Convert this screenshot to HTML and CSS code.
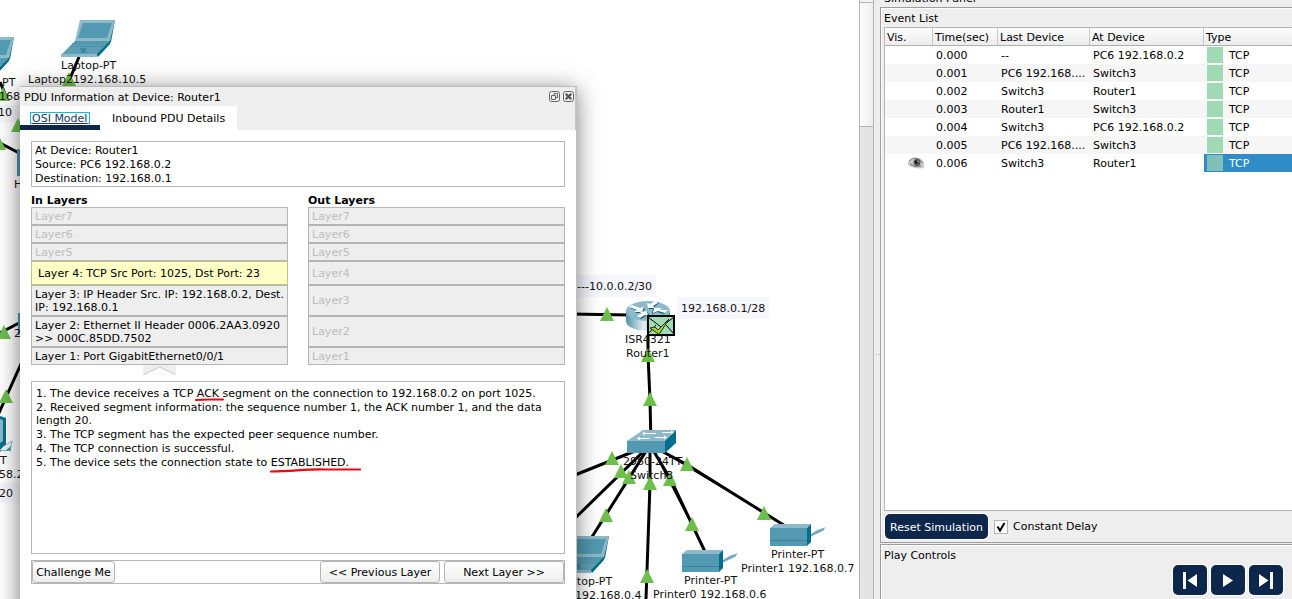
FILE: index.html
```html
<!DOCTYPE html>
<html lang="en">
<head>
<meta charset="utf-8">
<title>Packet Tracer - Simulation</title>
<link rel="stylesheet" href="styles.css">
</head>
<body>
<div class="app">
  <main class="workspace">
    <svg class="topology" width="859" height="599" viewBox="0 0 859 599">
      <defs>
        <linearGradient id="cyl" x1="0" x2="1"><stop offset="0" stop-color="#4f93ab"/><stop offset=".4" stop-color="#e3eef2"/><stop offset=".7" stop-color="#9cc3d1"/><stop offset="1" stop-color="#3f87a2"/></linearGradient>
        <g id="laptop">
          <path d="M54 0 50 22 37 36 34 34 48 20 52 1Z" fill="#006e8c"/>
          <path d="M19 0H54L49 21H14Z" fill="#8db9c9"/>
          <path d="M22 3H51L46 18H17Z" fill="#5399b1"/>
          <path d="M14 21H49L36 35H0Z" fill="#5f9fb5"/>
          <path d="M14 22H48M11 24H46M9 26.500H44" stroke="#3f8ba5" stroke-dasharray="2 1"/>
          <path d="M0 34H36V37H0Z" fill="#8db9c9"/>
          <path d="M36 34 49 21V24L37 37Z" fill="#006e8c"/>
          <path d="M19 29h6l-5 3h6" stroke="#1e7895" fill="none"/>
        </g>
        <g id="printer">
          <path d="M38 12 47 6 56 3 53 7 40 13Z" fill="#8db9c9"/><path d="M39 12 54 5" stroke="#5399b1"/>
          <path d="M0 4 5 0H41L37 4Z" fill="#8db9c9"/><path d="M0 4H37V22H0Z" fill="#5399b1"/><path d="M37 4 41 0V18L37 22Z" fill="#006e8c"/><path d="M0 16.500H37" stroke="#3b7f96"/>
        </g>
        <path id="up" d="M0-7 7 7H-7Z" fill="#6cbf4b"/>
      </defs>
      <g fill="#f6f7fd"><path d="M0 105H30V122H0ZM0 483H30V503H0ZM560 275H656V297H560ZM677 297H769V319H677Z"/></g>
      <g stroke="#000" stroke-width="3">
        <path d="M79 57 69 81M0 82 6 96M0 143 21 154M0 333 21 322M-2 415 25 355M570 314 630 315M648 335 648 355 650 400 651 445M650 445 570 477M650 445 565 528M650 445 590 540M650 445 650 484 646 599M650 445 671 480 708 558M650 445 686 464 790 529"/>
      </g>
      <use href="#laptop" x="61" y="20"/>
      <use href="#laptop" x="-40" y="37"/>
      <use href="#laptop" x="555" y="536"/>
      <use href="#printer" x="770" y="524"/>
      <use href="#printer" x="682" y="550"/>
      <path d="M17 149h8v27h-8ZM18 313h8v22h-8Z" fill="#5399b1"/>
      <path d="M0 416 6 418V447L0 452Z" fill="#006e8c"/><path d="M0 419 3 420V441L0 443Z" fill="#8db9c9"/><path d="M4 446 12 441 11 447 6 451 0 450Z" fill="#eef5f8" stroke="#8db9c9"/><path d="M5 451 11 446V451Z" fill="#5399b1"/>
      <path d="M626 311V321C626 334 670 334 670 321V311Z" fill="url(#cyl)"/>
      <ellipse cx="648" cy="311" rx="22" ry="10" fill="#8db9c9"/>
      <g fill="#00607c"><path d="M630 308 633 306 641 309 645 308 643 313 635 313 638 311ZM667 311 664 314 657 312 652 314 653 309 661 309 659 311ZM659 303 656 302 651 305 648 304 649 309 656 309 654 307ZM638 317 641 319 646 316 650 316 647 311 640 312 643 314Z"/></g>
      <g fill="#fff"><path d="M629 307 632 305 640 308 644 307 642 312 634 312 637 310ZM668 310 665 313 658 311 653 313 654 308 662 308 660 310ZM658 303 655 301 650 304 647 303 648 308 655 308 653 306ZM637 316 640 318 645 315 648 316 647 311 639 312 642 313Z"/></g>
      <path d="M627 441 643 430H676L665 441Z" fill="#8db9c9"/><path d="M627 441H665V453H627Z" fill="#5399b1"/><path d="M665 441 676 430V443L665 453Z" fill="#006e8c"/>
      <path d="M643 433.500H656M662 432.500H673M637 438.500H650M655 437.500H666" stroke="#fff"/><path d="M642 433.500l3-2v4ZM674 432.500l-3-2v4ZM637 438.500l3-2v4ZM667 437.500l-3-2v4Z" fill="#fff"/>
      <g><use href="#up" x="69" y="79"/><use href="#up" x="3" y="94"/><use href="#up" x="18" y="125"/><use href="#up" x="-1" y="143"/><use href="#up" x="4" y="332"/><use href="#up" x="6" y="396"/><use href="#up" x="607" y="314"/><use href="#up" x="648" y="355"/><use href="#up" x="650" y="399"/><use href="#up" x="612" y="458"/><use href="#up" x="621" y="471"/><use href="#up" x="629" y="477"/><use href="#up" x="650" y="483"/><use href="#up" x="670" y="479"/><use href="#up" x="687" y="464"/><use href="#up" x="764" y="513"/><use href="#up" x="692" y="524"/><use href="#up" x="606" y="515"/><use href="#up" x="647" y="576"/></g>
      <g class="node-labels">
        <text x="61" y="69">Laptop-PT</text><text x="28" y="83">Laptop2192.168.10.5</text>
        <text x="2" y="86">PT</text><text x="-1" y="100">168</text><text x="-2" y="116">10</text><text x="14" y="188">H</text><text x="14" y="337">2</text>
        <text x="0" y="464">T</text><text x="-1" y="478">58.2</text><text x="-1" y="497">20</text>
        <text x="577" y="290">---10.0.0.2/30</text><text x="681" y="312">192.168.0.1/28</text>
        <text x="625" y="343">ISR4321</text><text x="626" y="357">Router1</text>
        <text x="623" y="465">2960-24TT</text><text x="630" y="479">Switch3</text>
        <text x="771" y="558">Printer-PT</text><text x="741" y="572">Printer1 192.168.0.7</text>
        <text x="684" y="584">Printer-PT</text><text x="653" y="598">Printer0 192.168.0.6</text>
        <text x="557" y="585">Laptop-PT</text><text x="575" y="599">192.168.0.4</text>
      </g>
      <path d="M648 316H674V335H648Z" fill="#9fdbb6" stroke="#000" stroke-width="2"/>
      <path d="M648 317 661 327 674 317M648 334 656 325M674 334 666 325" fill="none" stroke="#000"/>
      <path d="M650 328 655 327 658 330 669 319 659 334.500Z" fill="#a5d32a" stroke="#26300c"/>
    </svg>

    <section class="dialog">
      <header class="dialog-title"><span>PDU Information at Device: Router1</span>
        <svg width="26" height="12" viewBox="0 0 26 12" fill="none" stroke="#666"><rect x=".5" y=".5" width="10" height="10" rx="2"/><path d="M5 4.500V2.500H8.500V6.500H7M2.500 4.500H6.500V8.500H2.500Z"/><rect x="14.500" y=".5" width="10" height="10" rx="2"/><path d="M16.700 2.700 22.300 8.300M22.300 2.700 16.700 8.300" stroke="#555" stroke-width="2.200"/></svg>
      </header>
      <nav class="tabs"><div class="tab tab-active"><span>OSI Model</span></div><div class="tab">Inbound PDU Details</div></nav>
      <div class="dialog-body">
        <div class="summary">At Device: Router1<br>Source: PC6 192.168.0.2<br>Destination: 192.168.0.1</div>
        <div class="layer-columns">
          <div class="layers"><h2>In Layers</h2>
            <div class="layer off">Layer7</div><div class="layer off">Layer6</div><div class="layer off">Layer5</div>
            <div class="layer current">Layer 4: TCP Src Port: 1025, Dst Port: 23</div>
            <div class="layer tall">Layer 3: IP Header Src. IP: 192.168.0.2, Dest.<br>IP: 192.168.0.1</div>
            <div class="layer tall">Layer 2: Ethernet II Header 0006.2AA3.0920<br>&gt;&gt; 000C.85DD.7502</div>
            <div class="layer">Layer 1: Port GigabitEthernet0/0/1</div>
            <svg class="notch" width="33" height="10" viewBox="0 0 33 10"><path d="M0 0H33V10H0Z" fill="#eee"/><path d="M1 9.500 16.500 2 32 9.500" fill="#fff" stroke="#c8c8c8"/></svg>
          </div>
          <div class="layers"><h2>Out Layers</h2>
            <div class="layer off">Layer7</div><div class="layer off">Layer6</div><div class="layer off">Layer5</div>
            <div class="layer off medium">Layer4</div><div class="layer off tall">Layer3</div><div class="layer off tall">Layer2</div><div class="layer off">Layer1</div>
          </div>
        </div>
        <div class="details">
          <p>1. The device receives a TCP ACK segment on the connection to 192.168.0.2 on port 1025.</p>
          <p>2. Received segment information: the sequence number 1, the ACK number 1, and the data<br>length 20.</p>
          <p>3. The TCP segment has the expected peer sequence number.</p>
          <p>4. The TCP connection is successful.</p>
          <p>5. The device sets the connection state to ESTABLISHED.</p>
          <svg class="marks" width="532" height="171" viewBox="32 382 532 171"><path d="M196 400 209 399.500 223 399.500M271 471.500C295 471 307 469 325 469.500L360 469.500" fill="none" stroke="#f4040c" stroke-width="2.200" stroke-linecap="round"/></svg>
        </div>
        <footer class="actions"><button class="btn challenge">Challenge Me</button><button class="btn previous">&lt;&lt; Previous Layer</button><button class="btn next">Next Layer &gt;&gt;</button></footer>
      </div>
    </section>
  </main>
  <div class="scrollbar"><div class="thumb-cap"></div><div class="thumb"></div></div>
  <div class="splitter"><i></i><i></i></div>
  <aside class="sim">
    <div class="sim-title">Simulation Panel</div>
    <section class="events">
      <h3>Event List</h3>
      <div class="table">
        <div class="row head"><span>Vis.</span><span>Time(sec)</span><span>Last Device</span><span>At Device</span><span>Type</span></div>
        <div class="row"><span></span><span>0.000</span><span>--</span><span>PC6 192.168.0.2</span><span class="type"><i></i>TCP</span></div>
        <div class="row alt"><span></span><span>0.001</span><span>PC6 192.168....</span><span>Switch3</span><span class="type"><i></i>TCP</span></div>
        <div class="row"><span></span><span>0.002</span><span>Switch3</span><span>Router1</span><span class="type"><i></i>TCP</span></div>
        <div class="row alt"><span></span><span>0.003</span><span>Router1</span><span>Switch3</span><span class="type"><i></i>TCP</span></div>
        <div class="row"><span></span><span>0.004</span><span>Switch3</span><span>PC6 192.168.0.2</span><span class="type"><i></i>TCP</span></div>
        <div class="row alt"><span></span><span>0.005</span><span>PC6 192.168....</span><span>Switch3</span><span class="type"><i></i>TCP</span></div>
        <div class="row"><span class="vis"><svg width="16" height="12" viewBox="0 0 16 12"><path d="M0 5C4-1 12-1 16 6V11C10 12 4 11 0 8Z" fill="#c9c9c9"/><path d="M1 4C5 0 11 0 15 6M2 7Q7 11 13 9" fill="none" stroke="#777"/><circle cx="9" cy="5.500" r="3.500" fill="#555"/><circle cx="8.500" cy="5" r="1.600" fill="#111"/><circle cx="10" cy="4.500" r=".7" fill="#eee"/></svg></span><span>0.006</span><span>Switch3</span><span>Router1</span><span class="type selected"><i></i>TCP</span></div>
      </div>
      <div class="event-tools"><button class="reset">Reset Simulation</button><span class="check"><svg width="12" height="12" viewBox="0 0 12 12"><path d="M2.500 5.500 5 9.500 9.500 2" fill="none" stroke="#000" stroke-width="2"/></svg></span><span>Constant Delay</span></div>
    </section>
    <section class="play">
      <h3>Play Controls</h3>
      <div class="play-buttons">
        <button><svg width="34" height="30" viewBox="0 0 34 30"><path d="M10 7h3v17h-3ZM24 9V22L14.500 15.500Z"/></svg></button>
        <button><svg width="34" height="30" viewBox="0 0 34 30"><path d="M12 9V22L22 15.500Z"/></svg></button>
        <button><svg width="34" height="30" viewBox="0 0 34 30"><path d="M10 9V22L19.500 15.500ZM21 7h3v17h-3Z"/></svg></button>
      </div>
    </section>
  </aside>
</div>
</body>
</html>
```

FILE: styles.css
```css
* { box-sizing: border-box; margin: 0; padding: 0; }
body { font: 11px/14px "DejaVu Sans", sans-serif; color: #000; background: #eee; overflow: hidden; }
button { font: inherit; }
svg { display: block; flex: none; }
h2, h3 { font-size: 11px; }
h3 { font-weight: normal; }

.app { display: flex; width: 1292px; height: 599px; overflow: hidden; }
.workspace { position: relative; width: 859px; background: #fff; overflow: hidden; }
.node-labels { font: 11px "DejaVu Sans", sans-serif; fill: #111; }

.dialog { position: absolute; left: 20px; top: 86px; width: 556px; height: 540px; background: #fff; border-top: 1px solid #bababa; box-shadow: 1px 0 #c0c0c0, 0 4px 22px rgba(0,0,0,.55); }
.dialog-title { display: flex; justify-content: space-between; height: 19px; padding: 4px 0 0 4px; background: #eee; border-right: 1px solid #c4c4c4; line-height: 13px; }
.tabs { display: flex; height: 24px; background: #eee; border-right: 1px solid #c4c4c4; }
.tab { width: 137px; padding: 6px 0 0 12px; background: #fff; white-space: nowrap; }
.tab-active { width: 80px; padding: 6px 0 0 10px; border-bottom: 5px solid #0d264c; color: #173865; }
.tab-active span { display: block; width: 60px; height: 12px; padding-left: 1px; border: 1px solid #15b8e4; line-height: 11px; text-decoration: underline; }
.dialog-body { padding: 11px 11px 0; }
.summary { height: 46px; padding: 2px 3px 0; border: 1px solid #b5b5b5; }
.layer-columns { display: flex; gap: 20px; padding-top: 7px; }
.layers { width: 257px; }
.layers h2 { height: 13px; line-height: 13px; }
.layer { display: flex; align-items: center; height: 18px; padding: 0 3px; background: #eee; border: 1px solid #b5b5b5; line-height: 13px; white-space: nowrap; }
.off { color: #bdbdbd; }
.current { height: 24px; padding-left: 6px; background: #ffffc6; border-color: #c2c291; }
.medium { height: 24px; }
.tall { height: 31px; }
.notch { margin-left: 112px; }
.details { position: relative; height: 173px; margin-top: 6px; padding: 5px 4px; border: 1px solid #b5b5b5; white-space: nowrap; line-height: 13px; letter-spacing: -.01px; }
.details p { margin-bottom: 1px; }
.marks { position: absolute; left: 0; top: 0; }
.actions { display: flex; height: 24px; margin-top: 6px; border: 1px solid #b5b5b5; }
.btn { height: 22px; padding-top: 2px; background: linear-gradient(#fff, #ededed); border: 1px solid #b4b4b4; border-radius: 3px; }
.challenge { width: 83px; }
.previous { width: 120px; margin-left: auto; }
.next { width: 120px; margin-left: 4px; }

.scrollbar { width: 15px; background: #e4e4e4; border: solid #b5b5b5; border-width: 0 1px; }
.thumb-cap { height: 3px; background: #f4f4f4; border-bottom: 1px solid #b5b5b5; }
.thumb { height: 124px; background: linear-gradient(90deg, #fcfcfc, #eee); border-bottom: 1px solid #b5b5b5; }
.splitter { display: flex; gap: 2px; width: 6px; padding: 354px 0 0 2px; background: #eee; }
.splitter i { width: 1px; height: 1px; background: #aaa; }
.sim { width: 412px; background: #eee; }
.sim-title { height: 7px; padding: 0 0 1px 4px; line-height: 14px; display: flex; align-items: flex-end; overflow: hidden; }
.events { height: 536px; padding-left: 3px; border: solid #9d9d9d; border-width: 1px 0 1px 1px; box-shadow: inset 1px 1px #fff; }
.events h3 { height: 19px; padding-top: 4px; }
.table { height: 484px; background: #fff; border: solid #b5b5b5; border-width: 1px 0 1px 1px; }
.row { display: grid; grid-template-columns: 48px 65px 92px 114px 1fr; height: 18px; line-height: 20px; white-space: nowrap; }
.row > span { height: 18px; padding-left: 3px; }
.row > .vis { padding: 3px 0 0 23px; }
.alt { background: #f6f6f6; }
.head { background: linear-gradient(#fdfdfd, #ececec); border-bottom: 1px solid #b0b0b0; }
.head > span { height: 17px; padding-left: 2px; border-right: 1px solid #c8c8c8; }
.head > span:last-child { border-right: 0; }
.row > .type { display: flex; gap: 6px; }
.type i { width: 16px; height: 16px; margin-top: 1px; background: #9fdab4; }
.row > .selected { background: #308cc6; color: #fff; }
.selected i { background: #7fc1b9; }
.event-tools { display: flex; align-items: center; height: 31px; padding-left: 1px; }
.reset { width: 103px; height: 25px; padding-top: 2px; color: #fff; background: #0d264c; border: 0; border-radius: 5px; box-shadow: 0 0 0 1px #fff; white-space: nowrap; }
.check { width: 14px; height: 14px; margin: 0 5px 0 6px; background: #fff; border: 1px solid #b5b5b5; }
.play { height: 60px; margin-top: 1px; padding: 4px 9px 0 3px; border: solid #9d9d9d; border-width: 1px 0 0 1px; box-shadow: inset 1px 1px #fff; }
.play-buttons { display: flex; justify-content: flex-end; gap: 4px; margin-top: 2px; }
.play-buttons button { width: 34px; height: 30px; background: #0d264c; border: 0; border-radius: 5px; box-shadow: 0 0 0 1px #fff; }
.play-buttons path { fill: #fff; }
```
